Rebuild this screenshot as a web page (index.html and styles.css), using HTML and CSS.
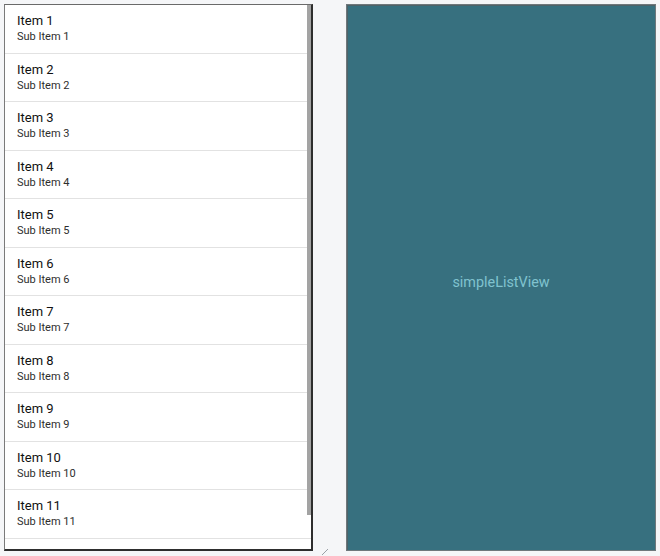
FILE: index.html
```html
<!DOCTYPE html>
<html>
<head>
<meta charset="utf-8">
<link rel="stylesheet" href="styles.css">
</head>
<body>
<div class="page">
  <div class="list-panel">
    <div class="list">
      <div class="row"><div class="title">Item 1</div><div class="sub">Sub Item 1</div></div>
      <div class="row"><div class="title">Item 2</div><div class="sub">Sub Item 2</div></div>
      <div class="row"><div class="title">Item 3</div><div class="sub">Sub Item 3</div></div>
      <div class="row"><div class="title">Item 4</div><div class="sub">Sub Item 4</div></div>
      <div class="row"><div class="title">Item 5</div><div class="sub">Sub Item 5</div></div>
      <div class="row"><div class="title">Item 6</div><div class="sub">Sub Item 6</div></div>
      <div class="row"><div class="title">Item 7</div><div class="sub">Sub Item 7</div></div>
      <div class="row"><div class="title">Item 8</div><div class="sub">Sub Item 8</div></div>
      <div class="row"><div class="title">Item 9</div><div class="sub">Sub Item 9</div></div>
      <div class="row"><div class="title">Item 10</div><div class="sub">Sub Item 10</div></div>
      <div class="row"><div class="title">Item 11</div><div class="sub">Sub Item 11</div></div>
      <div class="row"><div class="title">Item 12</div><div class="sub">Sub Item 12</div></div>
    </div>
    <div class="thumb"></div>
  </div>
  <div class="gap-area">
    <svg class="grip" width="8" height="8" viewBox="0 0 8 8"><path d="M1 7 L7 1" stroke="#9aa0a6" stroke-width="1"/></svg>
  </div>
  <div class="preview-panel">
    <span class="preview-label">simpleListView</span>
  </div>
</div>
</body>
</html>
```
FILE: styles.css
```css
html, body {
  margin: 0;
  padding: 0;
  background: #f5f6f8;
  font-family: Roboto, "Noto Sans", sans-serif;
}
.page {
  display: flex;
  padding: 4px;
  height: 556px;
  box-sizing: border-box;
}
.list-panel {
  position: relative;
  width: 309px;
  height: 547px;
  box-sizing: border-box;
  background: #fff;
  border-top: 1px solid #6a6a6a;
  border-left: 1px solid #7a7a7a;
  border-right: 2px solid #2e2e2e;
  border-bottom: 2px solid #2e2e2e;
  overflow: hidden;
}
.list {
  display: flex;
  flex-direction: column;
}
.row {
  height: 48.5px;
  flex: 0 0 48.5px;
  box-sizing: border-box;
  border-bottom: 1px solid #e2e2e2;
  padding: 8px 0 0 12px;
}
.title {
  font-size: 13px;
  line-height: 16px;
  color: #111;
}
.sub {
  font-size: 11px;
  line-height: 16px;
  color: #2e2e2e;
}
.thumb {
  position: absolute;
  right: 0;
  top: 0;
  width: 4px;
  height: 510px;
  background: #a3a3a3;
}
.gap-area {
  position: relative;
  width: 33px;
}
.grip {
  position: absolute;
  left: 8px;
  top: 544px;
}
.preview-panel {
  width: 310px;
  height: 547px;
  box-sizing: border-box;
  background: #37707f;
  border: 1px solid #6f787c;
  box-shadow: inset 1px 1px 0 #4f6268;
  display: flex;
  align-items: center;
  justify-content: center;
}
.preview-label {
  font-size: 14.4px;
  color: #80c3cf;
  margin-top: 9px;
}
```
